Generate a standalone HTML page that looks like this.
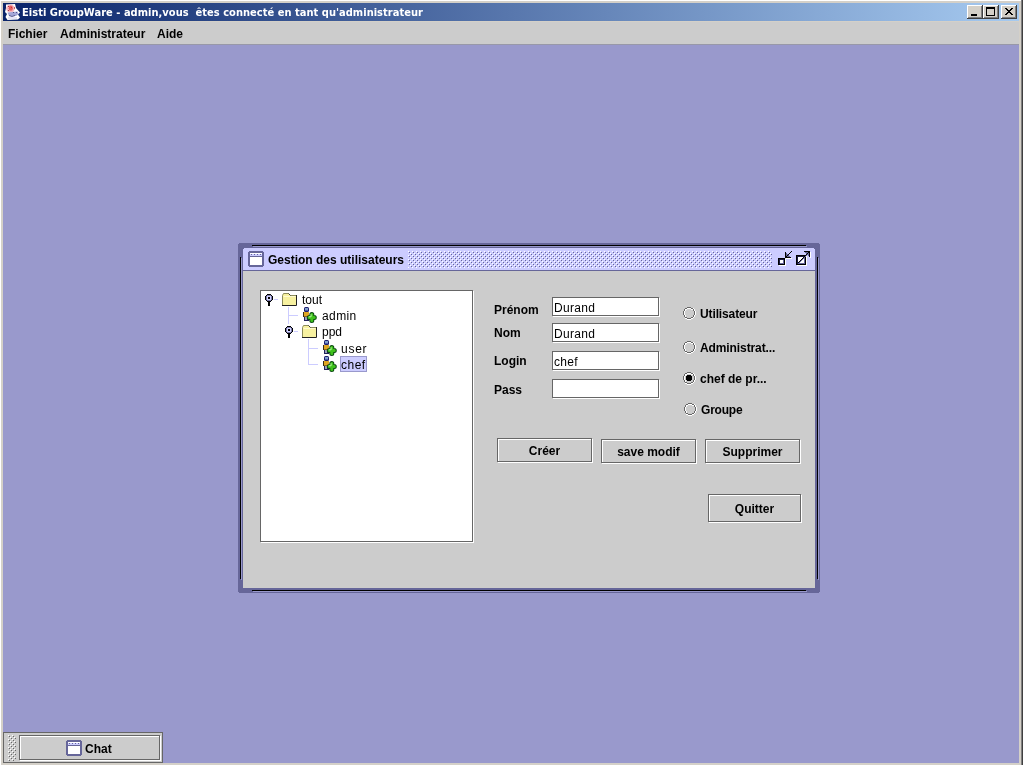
<!DOCTYPE html>
<html lang="fr">
<head>
<meta charset="utf-8">
<title>Eisti GroupWare</title>
<style>
html,body{margin:0;padding:0;}
body{width:1023px;height:765px;overflow:hidden;background:#d4d0c8;position:relative;
  font-family:"Liberation Sans",sans-serif;font-size:12px;line-height:14px;color:#000;}
div,span,input,button,label{position:absolute;box-sizing:border-box;margin:0;}
svg{position:absolute;overflow:visible;left:0;top:0;}
.t{white-space:nowrap;font-size:12px;line-height:14px;height:14px;}
.b{font-weight:bold;}
.t,label,#titletext{will-change:transform;}
#frame{left:0;top:0;width:1023px;height:765px;background:#d4d0c8;}
#titlebar{left:3px;top:3px;width:1016px;height:18px;background:linear-gradient(to right,#0a246a 0%,#a6caf0 100%);}
#titletext{left:22px;top:4px;height:18px;line-height:18px;color:#fff;font-weight:bold;font-size:11px;white-space:nowrap;
  font-family:"DejaVu Sans Condensed","Liberation Sans",sans-serif;letter-spacing:0.03px;}
.wb{top:5px;width:16px;height:14px;background:#d4d0c8;
  box-shadow:inset -1px -1px 0 #404040,inset 1px 1px 0 #fff,inset -2px -2px 0 #808080;}
#menubar{left:3px;top:22px;width:1016px;height:23px;background:#cccccc;border-bottom:1px solid #9898a8;}
#desktop{left:3px;top:45px;width:1016px;height:718px;background:#9999cc;}
#iframe{left:238px;top:243px;width:582px;height:350px;background:#666699;}
#iframe .c{width:1px;height:1px;background:#9999cc;}
#ititle{left:243px;top:248px;width:572px;height:23px;background:#ccccff;border-bottom:1px solid #666699;}
#icontent{left:243px;top:271px;width:572px;height:317px;background:#cccccc;}
.bumps{background-color:transparent;background-image:
  linear-gradient(#fff,#fff),linear-gradient(#fff,#fff),
  linear-gradient(#666699,#666699),linear-gradient(#666699,#666699);
  background-size:1px 1px,1px 1px,1px 1px,1px 1px;}
#tree{left:260px;top:290px;width:213px;height:252px;background:#fff;border:1px solid #666666;box-shadow:1px 1px 0 #fff;}
.tl{background:#ccccff;}
.fieldbg{background:#fff;border:1px solid #666666;box-shadow:1px 1px 0 #fff;left:552px;width:107px;height:19px;}
input.field{background:transparent;border:1px solid transparent;left:552px;width:107px;height:19px;will-change:transform;
  padding:2px 0 0 1px;font:12px/15px "Liberation Sans",sans-serif;color:#000;border-radius:0;outline:none;letter-spacing:0.3px;}
.btnbg{background:#cccccc;border:1px solid #666666;box-shadow:1px 1px 0 #fff,inset 1px 1px 0 #fff;}
button.btn{background:transparent;border:1px solid transparent;border-radius:0;will-change:transform;
  font:bold 12px/14px "Liberation Sans",sans-serif;color:#000;padding:2px 0 0 0;text-align:center;}
label.r{white-space:nowrap;font-weight:bold;font-size:12px;line-height:14px;height:14px;}
</style>
</head>
<body>
<svg width="0" height="0" style="position:absolute"><defs><g id="radio" shape-rendering="crispEdges"><rect x="10" y="1" width="1" height="1" fill="#ffffff"/><rect x="11" y="2" width="1" height="2" fill="#ffffff"/><rect x="12" y="4" width="1" height="4" fill="#ffffff"/><rect x="11" y="8" width="1" height="2" fill="#ffffff"/><rect x="10" y="10" width="1" height="1" fill="#ffffff"/><rect x="8" y="11" width="2" height="1" fill="#ffffff"/><rect x="4" y="12" width="4" height="1" fill="#ffffff"/><rect x="2" y="11" width="2" height="1" fill="#ffffff"/><rect x="2" y="8" width="1" height="2" fill="#ffffff"/><rect x="1" y="4" width="1" height="4" fill="#ffffff"/><rect x="2" y="2" width="1" height="2" fill="#ffffff"/><rect x="2" y="2" width="2" height="1" fill="#ffffff"/><rect x="4" y="1" width="4" height="1" fill="#ffffff"/><rect x="8" y="2" width="2" height="1" fill="#ffffff"/><rect x="4" y="0" width="4" height="1" fill="#666666"/><rect x="8" y="1" width="2" height="1" fill="#666666"/><rect x="10" y="2" width="1" height="2" fill="#666666"/><rect x="11" y="4" width="1" height="4" fill="#666666"/><rect x="10" y="8" width="1" height="2" fill="#666666"/><rect x="8" y="10" width="2" height="1" fill="#666666"/><rect x="4" y="11" width="4" height="1" fill="#666666"/><rect x="2" y="10" width="2" height="1" fill="#666666"/><rect x="1" y="8" width="1" height="2" fill="#666666"/><rect x="0" y="4" width="1" height="4" fill="#666666"/><rect x="1" y="2" width="1" height="2" fill="#666666"/><rect x="2" y="1" width="2" height="1" fill="#666666"/></g><g id="rdot" shape-rendering="crispEdges"><rect x="4" y="4" width="4" height="4" fill="#000000"/><rect x="4" y="3" width="4" height="1" fill="#000000"/><rect x="8" y="4" width="1" height="4" fill="#000000"/><rect x="4" y="8" width="4" height="1" fill="#000000"/><rect x="3" y="4" width="1" height="4" fill="#000000"/></g><g id="handle" shape-rendering="crispEdges"><rect x="1" y="1" width="6" height="6" fill="#d6d6ff"/><rect x="2" y="1" width="4" height="1" fill="#7a7aad"/><rect x="2" y="6" width="4" height="1" fill="#7a7aad"/><rect x="1" y="2" width="1" height="4" fill="#7a7aad"/><rect x="6" y="2" width="1" height="4" fill="#7a7aad"/><rect x="2" y="0" width="4" height="1" fill="#000000"/><rect x="2" y="7" width="4" height="1" fill="#000000"/><rect x="0" y="2" width="1" height="4" fill="#000000"/><rect x="7" y="2" width="1" height="4" fill="#000000"/><rect x="1" y="1" width="1" height="1" fill="#000000"/><rect x="6" y="1" width="1" height="1" fill="#000000"/><rect x="1" y="6" width="1" height="1" fill="#000000"/><rect x="6" y="6" width="1" height="1" fill="#000000"/><rect x="3" y="3" width="2" height="2" fill="#000000"/><rect x="3" y="8" width="2" height="4" fill="#000000"/></g><g id="folder"><path d="M0.5 2.5 L1.5 0.5 L6.5 0.5 L8.5 2.5 L14 2.5 L14 12 L0.5 12 Z" fill="#f7f1a0"/><path d="M0.5 12.5 V2.5 L1.5 0.5 H6.5 L8.5 2.5 H14" fill="none" stroke="#8c8c5a" stroke-width="1"/><path d="M6.5 0.5 L8.5 2.5" fill="none" stroke="#333" stroke-width="1"/><path d="M14.5 2 V12.5 H0" fill="none" stroke="#222" stroke-width="1"/><path d="M1.5 3.5 H13.5" stroke="#fffbd0" stroke-width="1"/></g><g id="user"><rect x="1" y="0" width="5" height="5" rx="1.5" fill="#1c1c6e"/><rect x="2" y="1" width="3" height="3" fill="#7f9fcc"/><rect x="2" y="3" width="3" height="1" fill="#4a5aa8"/><rect x="0" y="5" width="6" height="5" fill="#3a2a10"/><rect x="1" y="5" width="5" height="4.5" fill="#dfa522"/><rect x="1" y="10" width="5" height="4" fill="#20205a"/><rect x="2" y="10" width="2" height="3" fill="#9aa0b8"/><path d="M8.8 7.5 V13.5 M6.3 10.5 H11.3" stroke="#0a4a10" stroke-width="5" stroke-linecap="round" stroke-linejoin="round" fill="none"/><path d="M8.8 7.5 V13.5 M6.3 10.5 H11.3" stroke="#3fc21c" stroke-width="3" stroke-linecap="round" fill="none"/><path d="M8.1 7.3 V9.8 H5.8" stroke="#b4f49c" stroke-width="1" fill="none"/></g><g id="ficon" shape-rendering="crispEdges"><rect x="0.5" y="0.5" width="15" height="15" rx="1.5" fill="#ffffff" stroke="#666699" stroke-width="1"/><rect x="1" y="1" width="14" height="14" fill="none" stroke="#666699" stroke-width="2"/><rect x="2" y="2" width="12" height="3" fill="#ccccff"/><rect x="2" y="5" width="12" height="1" fill="#666699"/><rect x="3" y="3" width="1" height="1" fill="#666699"/><rect x="6" y="3" width="1" height="1" fill="#666699"/><rect x="9" y="3" width="1" height="1" fill="#666699"/><rect x="12" y="3" width="1" height="1" fill="#666699"/><rect x="2" y="2" width="12" height="1" fill="#ffffff"/><rect x="2" y="6" width="12" height="8" fill="#ffffff"/><rect x="0" y="0" width="1" height="1" fill="currentColor"/><rect x="15" y="0" width="1" height="1" fill="currentColor"/><rect x="0" y="15" width="1" height="1" fill="currentColor"/><rect x="15" y="15" width="1" height="1" fill="currentColor"/></g></defs></svg>
<div id="frame">
<div style="left:0;top:0;width:1021px;height:1px;background:#fff"></div>
<div style="left:0;top:0;width:1px;height:765px;background:#fff"></div>
<div style="left:1021px;top:0;width:1px;height:765px;background:#808080"></div>
<div style="left:1022px;top:0;width:1px;height:765px;background:#404040"></div>
<div id="titlebar"></div>
<svg width="24" height="24" viewBox="0 0 24 24"><path d="M6 4.5 L15 4 L16 8 L20 12.5 L18 14.5 L20 17.5 L18 19.5 L7.5 20 L5.5 17 L7 14 L5 12 L6 8 Z" fill="#ffffff"/><ellipse cx="10.5" cy="8.5" rx="4.3" ry="4" fill="#f6b6c0"/><ellipse cx="10.8" cy="8.2" rx="2.1" ry="2.6" fill="#e66060"/><rect x="8" y="6" width="1" height="1" fill="#b03040"/><rect x="11" y="7" width="1" height="1" fill="#c83838"/><rect x="14" y="7" width="1" height="2" fill="#c06060"/><rect x="8" y="10" width="1" height="1" fill="#a04050"/><path d="M7.5 12.5 L17.5 11.5 L18.5 14 L16 16 L9 16 Z" fill="#a3a7d8"/><path d="M9 15.5 L12 16.5 L15 15.5" stroke="#5a5a90" stroke-width="1" fill="none"/><rect x="13" y="12" width="1" height="1" fill="#505088"/><rect x="16" y="12" width="1" height="1" fill="#505088"/><path d="M8 18 H17" stroke="#dcdcf4" stroke-width="1.5"/></svg>
<div id="titletext">Eisti GroupWare - admin,vous&nbsp; êtes connecté en tant qu'administrateur</div>
<div class="wb" style="left:967px"></div><div class="wb" style="left:983px"></div><div class="wb" style="left:1001px"></div>
<svg width="1023" height="24" shape-rendering="crispEdges"><rect x="971" y="14" width="6" height="2" fill="#000"/><rect x="986" y="7" width="9" height="2" fill="#000"/><rect x="986" y="7" width="1" height="9" fill="#000"/><rect x="994" y="7" width="1" height="9" fill="#000"/><rect x="986" y="15" width="9" height="1" fill="#000"/><rect x="1005" y="8" width="2" height="1" fill="#000"/><rect x="1011" y="8" width="2" height="1" fill="#000"/><rect x="1006" y="9" width="2" height="1" fill="#000"/><rect x="1010" y="9" width="2" height="1" fill="#000"/><rect x="1007" y="10" width="4" height="1" fill="#000"/><rect x="1008" y="11" width="2" height="1" fill="#000"/><rect x="1007" y="12" width="4" height="1" fill="#000"/><rect x="1006" y="13" width="2" height="1" fill="#000"/><rect x="1010" y="13" width="2" height="1" fill="#000"/><rect x="1005" y="14" width="2" height="1" fill="#000"/><rect x="1011" y="14" width="2" height="1" fill="#000"/></svg>
<div id="menubar"><div class="t b" style="left:5px;top:5px">Fichier</div><div class="t b" style="left:57px;top:5px">Administrateur</div><div class="t b" style="left:154px;top:5px">Aide</div></div>
<div id="desktop"></div>
<div id="iframe"><div class="c" style="left:0;top:0"></div><div class="c" style="right:0;top:0"></div><div class="c" style="left:0;bottom:0"></div><div class="c" style="right:0;bottom:0"></div><div style="left:14px;top:2px;width:554px;height:1px;background:#000"></div><div style="left:15px;top:3px;width:554px;height:1px;background:#9999cc"></div><div style="left:2px;top:14px;width:1px;height:322px;background:#000"></div><div style="left:3px;top:15px;width:1px;height:322px;background:#9999cc"></div><div style="left:579px;top:14px;width:1px;height:322px;background:#000"></div><div style="left:580px;top:15px;width:1px;height:322px;background:#9999cc"></div><div style="left:14px;top:347px;width:554px;height:1px;background:#000"></div><div style="left:15px;top:348px;width:554px;height:1px;background:#9999cc"></div></div>
<div id="ititle"><div style="left:0;top:0;width:1px;height:1px;background:#666699"></div><div style="right:0;top:0;width:1px;height:1px;background:#666699"></div><div class="t b" style="left:25px;top:5px">Gestion des utilisateurs</div></div>
<svg width="1023" height="765"><defs><pattern id="bmp" x="408" y="251" width="4" height="4" patternUnits="userSpaceOnUse" shape-rendering="crispEdges"><rect x="0" y="0" width="1" height="1" fill="#fff"/><rect x="2" y="2" width="1" height="1" fill="#fff"/><rect x="1" y="1" width="1" height="1" fill="#666699"/><rect x="3" y="3" width="1" height="1" fill="#666699"/></pattern><pattern id="bmp2" x="8" y="735" width="4" height="4" patternUnits="userSpaceOnUse" shape-rendering="crispEdges"><rect x="0" y="0" width="1" height="1" fill="#fff"/><rect x="2" y="2" width="1" height="1" fill="#fff"/><rect x="1" y="1" width="1" height="1" fill="#666666"/><rect x="3" y="3" width="1" height="1" fill="#666666"/></pattern></defs><rect x="408" y="251" width="364" height="17" fill="url(#bmp)" shape-rendering="crispEdges"/><use href="#ficon" x="248" y="251" color="#ccccff"/><g shape-rendering="crispEdges"><rect x="779" y="259" width="7" height="7" fill="#ffffff"/><rect x="778" y="258" width="7" height="7" fill="#000000"/><rect x="779" y="259" width="5" height="5" fill="#666699"/><rect x="779" y="259" width="5" height="1" fill="#1a1a40"/><rect x="779" y="259" width="1" height="5" fill="#1a1a40"/><rect x="780" y="260" width="3" height="3" fill="#ffffff"/><rect x="786" y="253" width="1" height="6" fill="#ffffff"/><rect x="786" y="258" width="6" height="1" fill="#ffffff"/><rect x="785" y="252" width="1" height="6" fill="#000000"/><rect x="785" y="257" width="6" height="1" fill="#000000"/><rect x="786" y="253" width="1" height="4" fill="#666699"/><rect x="787" y="254" width="1" height="3" fill="#666699"/><rect x="788" y="255" width="1" height="2" fill="#666699"/><rect x="789" y="256" width="1" height="1" fill="#666699"/><rect x="786" y="256" width="1" height="1" fill="#000000"/><rect x="787" y="255" width="1" height="1" fill="#000000"/><rect x="788" y="254" width="1" height="1" fill="#000000"/><rect x="789" y="253" width="1" height="1" fill="#000000"/><rect x="790" y="252" width="1" height="1" fill="#000000"/><rect x="791" y="251" width="1" height="1" fill="#000000"/><rect x="797" y="256" width="10" height="10" fill="#ffffff"/><rect x="796" y="255" width="10" height="10" fill="#000000"/><rect x="797" y="256" width="8" height="8" fill="#666699"/><rect x="797" y="256" width="8" height="1" fill="#1a1a40"/><rect x="797" y="256" width="1" height="8" fill="#1a1a40"/><rect x="798" y="257" width="6" height="6" fill="#ffffff"/><rect x="805" y="252" width="6" height="1" fill="#ffffff"/><rect x="810" y="252" width="1" height="6" fill="#ffffff"/><rect x="804" y="251" width="6" height="1" fill="#000000"/><rect x="809" y="251" width="1" height="6" fill="#000000"/><rect x="805" y="252" width="4" height="1" fill="#666699"/><rect x="806" y="253" width="3" height="1" fill="#666699"/><rect x="807" y="254" width="2" height="1" fill="#666699"/><rect x="808" y="255" width="1" height="1" fill="#666699"/><rect x="799" y="262" width="1" height="1" fill="#666699"/><rect x="800" y="261" width="1" height="1" fill="#666699"/><rect x="801" y="260" width="1" height="1" fill="#666699"/><rect x="802" y="259" width="1" height="1" fill="#666699"/><rect x="803" y="258" width="1" height="1" fill="#666699"/><rect x="804" y="257" width="1" height="1" fill="#666699"/><rect x="805" y="256" width="1" height="1" fill="#666699"/><rect x="806" y="255" width="1" height="1" fill="#666699"/><rect x="807" y="254" width="1" height="1" fill="#666699"/><rect x="808" y="253" width="1" height="1" fill="#666699"/><rect x="798" y="262" width="1" height="1" fill="#000000"/><rect x="799" y="261" width="1" height="1" fill="#000000"/><rect x="800" y="260" width="1" height="1" fill="#000000"/><rect x="801" y="259" width="1" height="1" fill="#000000"/><rect x="802" y="258" width="1" height="1" fill="#000000"/><rect x="803" y="257" width="1" height="1" fill="#000000"/><rect x="804" y="256" width="1" height="1" fill="#000000"/><rect x="805" y="255" width="1" height="1" fill="#000000"/><rect x="806" y="254" width="1" height="1" fill="#000000"/><rect x="807" y="253" width="1" height="1" fill="#000000"/><rect x="808" y="252" width="1" height="1" fill="#000000"/></g></svg>
<div id="icontent"></div>
<div id="tree"></div>
<div class="tl" style="left:274px;top:299px;width:4px;height:1px"></div>
<div class="tl" style="left:288px;top:307px;width:1px;height:17px"></div>
<div class="tl" style="left:288px;top:315px;width:10px;height:1px"></div>
<div class="tl" style="left:294px;top:331px;width:4px;height:1px"></div>
<div class="tl" style="left:308px;top:339px;width:1px;height:26px"></div>
<div class="tl" style="left:308px;top:348px;width:10px;height:1px"></div>
<div class="tl" style="left:308px;top:364px;width:10px;height:1px"></div>
<svg width="1023" height="765"><use href="#handle" x="265" y="294"/><use href="#folder" x="282" y="293"/><use href="#user" x="303" y="307"/><use href="#handle" x="285" y="326"/><use href="#folder" x="302" y="325"/><use href="#user" x="323" y="340"/><use href="#user" x="323" y="356"/></svg>
<div class="t" style="left:302px;top:293px">tout</div>
<div class="t" style="left:322px;top:309px;letter-spacing:0.4px">admin</div>
<div class="t" style="left:322px;top:325px">ppd</div>
<div class="t" style="left:341px;top:342px;letter-spacing:0.75px">user</div>
<div style="left:340px;top:356px;width:27px;height:16px;background:#ccccff;border:1px solid #9999cc"></div>
<div class="t" style="left:341px;top:358px;letter-spacing:0.5px">chef</div>
<label class="t b" style="left:494px;top:303px">Prénom</label>
<label class="t b" style="left:494px;top:326px">Nom</label>
<label class="t b" style="left:494px;top:354px">Login</label>
<label class="t b" style="left:494px;top:383px">Pass</label>
<div class="fieldbg" style="top:297px"></div><input class="field" type="text" value="Durand" style="top:297px">
<div class="fieldbg" style="top:323px"></div><input class="field" type="text" value="Durand" style="top:323px">
<div class="fieldbg" style="top:351px"></div><input class="field" type="text" value="chef" style="top:351px">
<div class="fieldbg" style="top:379px"></div><input class="field" type="text" value="" style="top:379px">
<svg width="1023" height="765"><use href="#radio" x="683" y="307"/><use href="#radio" x="683" y="341"/><use href="#radio" x="683" y="372"/><use href="#rdot" x="683" y="372"/><use href="#radio" x="684" y="403"/></svg>
<label class="r" style="left:699.5px;top:307px;letter-spacing:-0.12px">Utilisateur</label>
<label class="r" style="left:700px;top:341px;letter-spacing:-0.1px">Administrat...</label>
<label class="r" style="left:700px;top:372px;letter-spacing:0px">chef de pr...</label>
<label class="r" style="left:700.5px;top:403px;letter-spacing:-0.2px">Groupe</label>
<div class="btnbg" style="left:497px;top:438px;width:95px;height:24px"></div><button class="btn" style="left:497px;top:438px;width:95px;height:24px">Créer</button>
<div class="btnbg" style="left:601px;top:439px;width:95px;height:24px"></div><button class="btn" style="left:601px;top:439px;width:95px;height:24px">save modif</button>
<div class="btnbg" style="left:705px;top:439px;width:95px;height:24px"></div><button class="btn" style="left:705px;top:439px;width:95px;height:24px">Supprimer</button>
<div class="btnbg" style="left:708px;top:494px;width:93px;height:28px"></div><button class="btn" style="left:708px;top:494px;width:93px;height:28px">Quitter</button>
<div id="dicon" style="left:3px;top:732px;width:160px;height:31px;background:#cccccc;border:1px solid #666666"></div>
<svg width="1023" height="765"><rect x="8" y="735" width="8" height="26" fill="url(#bmp2)" shape-rendering="crispEdges"/><use href="#ficon" x="66" y="740" color="#cccccc"/></svg>
<div style="left:19px;top:735px;width:141px;height:25px;background:#cccccc;border:1px solid #666666;box-shadow:1px 1px 0 #fff,inset 1px 1px 0 #fff"></div>
<svg width="1023" height="765"><use href="#ficon" x="66" y="740" color="#cccccc"/></svg>
<div class="t b" style="left:85px;top:742px">Chat</div>
</div>
</body>
</html>
